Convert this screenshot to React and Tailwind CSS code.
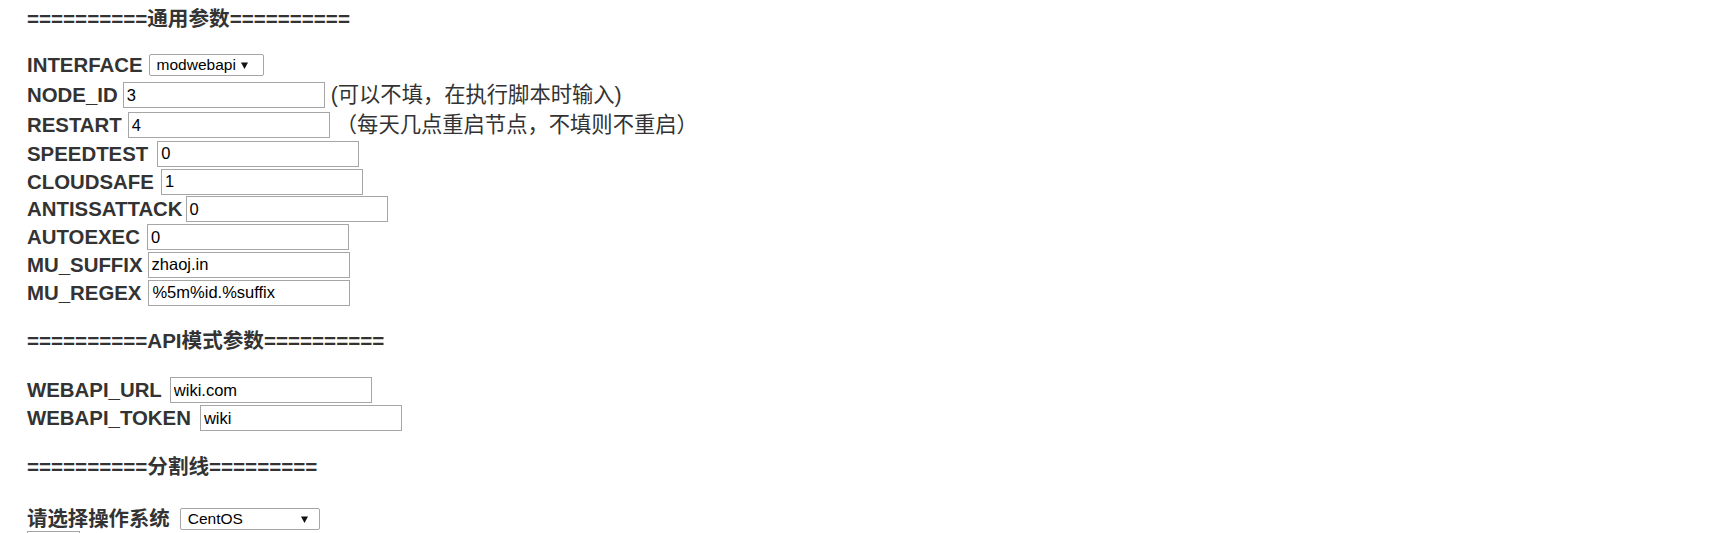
import React from 'react'

// 通用参数 rows
const commonRows = [
  { label: 'NODE_ID', value: '3', gap: 'ml-[5px]', h: 'h-[30px]', note: '(可以不填，在执行脚本时输入)' },
  { label: 'RESTART', value: '4', gap: 'ml-[6px]', h: 'h-[30px]', note: '（每天几点重启节点，不填则不重启）' },
  { label: 'SPEEDTEST', value: '0', gap: 'ml-[9px]', h: 'h-[27.75px]' },
  { label: 'CLOUDSAFE', value: '1', gap: 'ml-[7px]', h: 'h-[27.75px]' },
  { label: 'ANTISSATTACK', value: '0', gap: 'ml-[3px]', h: 'h-[27.75px]' },
  { label: 'AUTOEXEC', value: '0', gap: 'ml-[7px]', h: 'h-[27.75px]' },
  { label: 'MU_SUFFIX', value: 'zhaoj.in', gap: 'ml-[5px]', h: 'h-[27.75px]' },
  { label: 'MU_REGEX', value: '%5m%id.%suffix', gap: 'ml-[7px]', h: 'h-[27.75px]' },
]

const apiRows = [
  { label: 'WEBAPI_URL', value: 'wiki.com', gap: 'ml-[8px]', h: 'h-[28px]' },
  { label: 'WEBAPI_TOKEN', value: 'wiki', gap: 'ml-[9px]', h: 'h-[28px]' },
]

function Heading({ children, className }) {
  return <div className={'h-[24px] leading-[24px] text-[20.6px] font-bold whitespace-nowrap ' + className}>{children}</div>
}

function Row({ label, value, gap, h, note }) {
  return (
    <div className={'flex items-center whitespace-nowrap ' + h}>
      <span className="text-[20.4px] font-bold leading-[24px]">{label}</span>
      <input
        defaultValue={value}
        className={'w-[202px] h-[26px] border border-[#a6a6a6] bg-white px-[3px] text-[16.5px] text-black outline-none ' + gap}
      />
      {note && <span className="ml-[6px] text-[21.3px] leading-[24px]">{note}</span>}
    </div>
  )
}

function FakeSelect({ value, w, textPad, arrowPad }) {
  return (
    <div className={'flex h-[22px] items-center justify-between rounded-[2px] border border-[#a6a6a6] bg-white text-[15.5px] text-black ' + w + ' ' + textPad + ' ' + arrowPad}>
      <span className="leading-none">{value}</span>
      <svg width="7" height="7" viewBox="0 0 7 7" className="shrink-0">
        <path d="M0 0.5 H7 L3.5 7 Z" fill="#111" />
      </svg>
    </div>
  )
}

export default function App() {
  return (
    <div className="min-h-screen bg-white pl-[27px] pt-[7px] text-[#333] font-['Liberation_Sans','Noto_Sans_CJK_SC',sans-serif]">
      <Heading>==========通用参数==========</Heading>

      <div className="mt-[19px] flex flex-col">
        <div className="flex h-[30px] items-center whitespace-nowrap">
          <span className="text-[20.4px] font-bold leading-[24px]">INTERFACE</span>
          <div className="ml-[6px]">
            <FakeSelect value="modwebapi" w="w-[115px]" textPad="pl-[7px]" arrowPad="pr-[15px]" />
          </div>
        </div>
        {commonRows.map((r) => (
          <Row key={r.label} {...r} />
        ))}
      </div>

      <Heading className="mt-[22.5px]">==========API模式参数==========</Heading>

      <div className="mt-[23px] flex flex-col">
        {apiRows.map((r) => (
          <Row key={r.label} {...r} />
        ))}
      </div>

      <Heading className="mt-[23px]">==========分割线=========</Heading>

      <div className="mt-[28px] flex h-[24px] items-center whitespace-nowrap">
        <span className="text-[20.4px] font-bold leading-[24px]">请选择操作系统</span>
        <div className="ml-[10px]">
          <FakeSelect value="CentOS" w="w-[140px]" textPad="pl-[7px]" arrowPad="pr-[11px]" />
        </div>
      </div>

      <button className="mt-0 h-[26px] w-[53px] border border-[#a6a6a6] bg-white"></button>
    </div>
  )
}
